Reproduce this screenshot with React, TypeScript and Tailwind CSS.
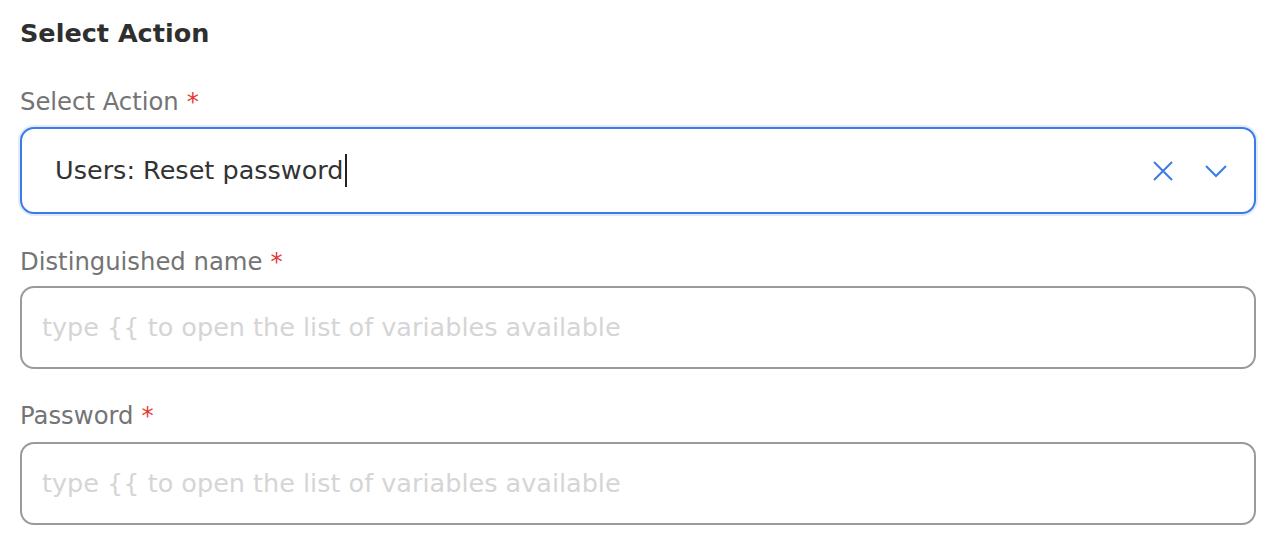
import React from "react";

const font = { fontFamily: '"DejaVu Sans", "Noto Sans", sans-serif' };

const Label = ({ text }: { text: string }) => (
  <div className="h-[30px] flex items-center text-[24.3px] text-[#747474] leading-[30px]">
    {text}
    <span className="ml-[8px] text-[#e53935]">*</span>
  </div>
);

const VariableInput = () => (
  <div className="h-[83px] w-full rounded-[14px] border-2 border-[#9a9a9a] bg-white flex items-center px-[20px]">
    <span className="text-[25.5px] text-[#d5d5d5]">
      type {"{{"} to open the list of variables available
    </span>
  </div>
);

export default function App() {
  return (
    <div className="min-h-screen bg-white px-[20px] pt-[15px]" style={font}>
      {/* heading */}
      <h2 className="h-[36px] flex items-center text-[25.5px] font-bold text-[#2f2f2f]">
        Select Action
      </h2>

      <div className="mt-[36px] flex flex-col">
        <Label text="Select Action" />
        <div className="mt-[10px] h-[87px] w-full rounded-[14px] border-2 border-[#3b7be8] shadow-[0_0_0_2px_rgba(59,123,232,0.15)] bg-white flex items-center pl-[33px] pr-[26px]">
          <span className="text-[25.5px] text-[#333] flex items-center">
            Users: Reset password
            <span className="inline-block w-[2px] h-[33px] bg-[#222] ml-[1px]" />
          </span>
          <div className="ml-auto flex items-center gap-[30px] text-[#3b7be8]">
            <svg width="22" height="22" viewBox="0 0 22 22" fill="none" stroke="currentColor" strokeWidth="2">
              <path d="M2 2 L20 20 M20 2 L2 20" />
            </svg>
            <svg width="24" height="14" viewBox="0 0 24 14" fill="none" stroke="currentColor" strokeWidth="2">
              <path d="M2 2 L12 12 L22 2" />
            </svg>
          </div>
        </div>

        <div className="mt-[33px]">
          <Label text="Distinguished name" />
        </div>
        <div className="mt-[9px]">
          <VariableInput />
        </div>

        <div className="mt-[32px]">
          <Label text="Password" />
        </div>
        <div className="mt-[11px]">
          <VariableInput />
        </div>
      </div>
    </div>
  );
}
